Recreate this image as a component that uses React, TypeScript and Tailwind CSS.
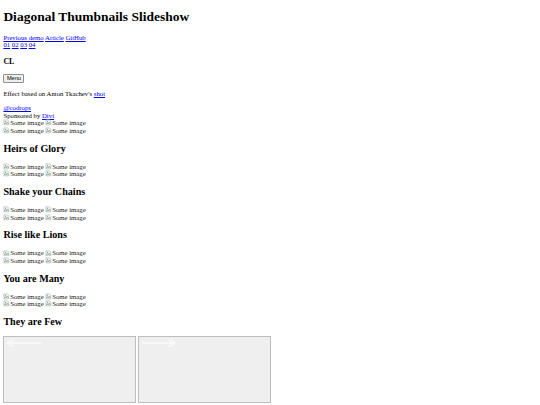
import React from "react";

const serif = { fontFamily: '"Liberation Serif", "Times New Roman", serif' };

function BrokenIcon() {
  return (
    <svg width="6.75" height="6.75" viewBox="0 0 16 16" className="inline-block align-[-1px]">
      <path d="M2 2h9l3 3v3l-3 2-3-2-6 3z" fill="#f4f4f4" stroke="#9a9a9a" strokeWidth="1" />
      <path d="M2 13l6-3 3 2 3-2v4H2z" fill="#f4f4f4" stroke="#9a9a9a" strokeWidth="1" />
      <path d="M3 12l3-3 2 2 3-3 3 3" fill="none" stroke="#4caf50" strokeWidth="1.4" />
      <circle cx="6" cy="5.5" r="1.3" fill="#4a90d9" />
    </svg>
  );
}

function Img() {
  return (
    <span className="inline-block whitespace-nowrap text-[#222]">
      <BrokenIcon />
      Some image
    </span>
  );
}

function ImgRows() {
  return (
    <div>
      <div>
        <Img /> <Img />
      </div>
      <div>
        <Img /> <Img />
      </div>
    </div>
  );
}

function H2({ children }: { children: React.ReactNode }) {
  return <h2 className="text-[10.125px] font-bold my-[8.4px] leading-[11.39px]">{children}</h2>;
}

const A = ({ children }: { children: React.ReactNode }) => (
  <a href="#" className="text-[#0000ee] underline">
    {children}
  </a>
);

export default function App() {
  return (
    <div className="bg-white text-black min-h-[405px] px-[3.375px] pt-[0.1px] text-[6.75px] leading-[7.594px]" style={serif}>
      <h1 className="text-[13.5px] font-bold my-[9.05px] leading-[15.61px]">Diagonal Thumbnails Slideshow</h1>
      <div>
        <A>Previous demo</A> <A>Article</A> <A>GitHub</A>
      </div>
      <div>
        <A>01</A> <A>02</A> <A>03</A> <A>04</A>
      </div>
      <h3 className="text-[7.9px] font-bold my-[7.9px] leading-[9.28px]">CL</h3>
      <div className="h-[8.86px] flex items-start">
        <button
          className="h-[8.86px] text-[5.625px] leading-[6.33px] px-[2.5px] bg-[#efefef] border-[0.6px] border-[#8f8f8f] rounded-[1px] text-black"
          style={{ fontFamily: '"Liberation Sans", Arial, sans-serif' }}
        >
          Menu
        </button>
      </div>
      <p className="my-[6.75px]">
        Effect based on Anton Tkachev's <A>shot</A>
      </p>
      <div>
        <A>@codrops</A>
      </div>
      <div>
        Sponsored by <A>Divi</A>
      </div>
      <ImgRows />
      <H2>Heirs of Glory</H2>
      <ImgRows />
      <H2>Shake your Chains</H2>
      <ImgRows />
      <H2>Rise like Lions</H2>
      <ImgRows />
      <H2>You are Many</H2>
      <ImgRows />
      <H2>They are Few</H2>
      <div className="flex gap-[2px]">
        <button className="relative w-[133px] h-[67px] bg-[#efefef] border border-[#bdbdbd]">
          <svg width="36" height="10" viewBox="0 0 36 10" className="absolute left-[2px] top-[1px]">
            <path d="M1 5h35" stroke="#fff" strokeWidth="1" />
            <path d="M5 1L1 5l4 4M8 1L4 5l4 4" stroke="#fff" strokeWidth="1" fill="none" />
          </svg>
        </button>
        <button className="relative w-[133px] h-[67px] bg-[#efefef] border border-[#bdbdbd]">
          <svg width="34" height="10" viewBox="0 0 34 10" className="absolute left-[3px] top-[1px]">
            <path d="M0 5h33" stroke="#fff" strokeWidth="1" />
            <path d="M29 1l4 4-4 4M26 1l4 4-4 4" stroke="#fff" strokeWidth="1" fill="none" />
          </svg>
        </button>
      </div>
    </div>
  );
}
